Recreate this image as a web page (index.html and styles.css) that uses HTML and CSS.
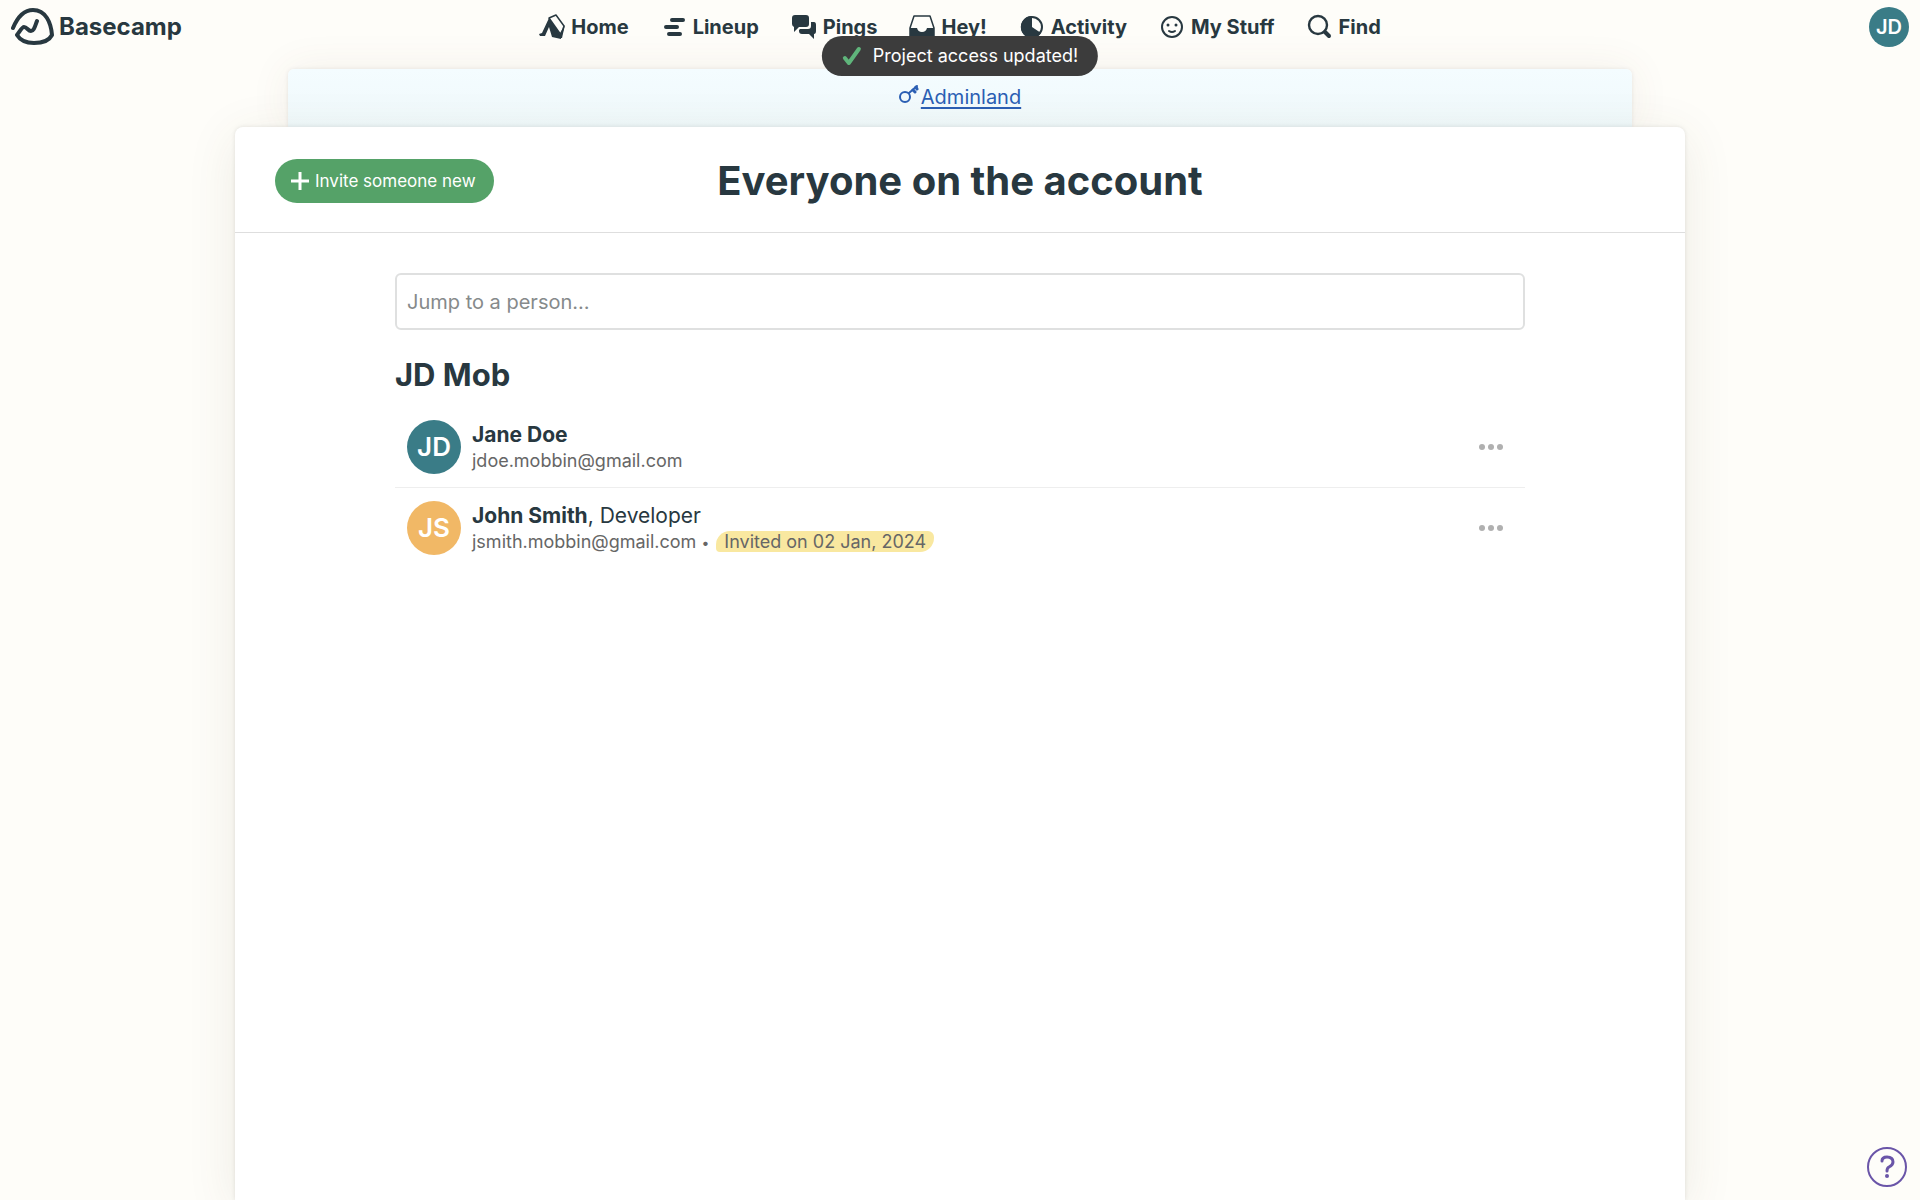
FILE: index.html
```html
<!DOCTYPE html>
<html lang="en">
	<head>
		<meta charset="utf-8" />
		<meta name="viewport" content="width=device-width, initial-scale=1">
		<title>Everyone on the account</title>
		<link rel="stylesheet" href="styles.css">
	</head>
	<body>
		<header class="topbar">
			<a class="logo" href="#">
				<svg width="44" height="40" viewBox="0 0 44 40" fill="none" stroke="currentColor" stroke-width="4" stroke-linecap="round" stroke-linejoin="round">
					<path d="M2 21C7 9 13 3 22 3C35 3 40 16 41 28C38 34 31 36 23 36C15 36 9 33 6 28C9 24 11 20 13 20C16 20 17 24 20 24C23 24 24 19 26 14"/>
				</svg>
				<span>Basecamp</span>
			</a>
			<nav class="nav">
				<a href="#">
					<svg width="26" height="26" viewBox="0 0 26 26">
						<path fill="currentColor" d="M0 20L3 19L10 4L13 7L22 22L22 25L13 23L10 13L6 22L1 22Z"/>
						<path fill="#fefdf9" stroke="currentColor" stroke-width="1.5" stroke-linejoin="round" d="M10 4L17 1L25 12L22 21Z"/>
						<path fill="currentColor" d="M21 19L26 11L23 24L19 24Z"/>
					</svg>
					Home
				</a>
				<a href="#">
					<svg width="26" height="26" viewBox="0 0 26 26" stroke="currentColor" stroke-width="4" stroke-linecap="round">
						<path d="M11 6H22M5 13H16M8 20H19"/>
					</svg>
					Lineup
				</a>
				<a href="#">
					<svg width="26" height="26" viewBox="0 0 26 26" fill="currentColor">
						<path d="M4 1H15Q18 1 18 4V10Q18 13 15 13H8L3 18V13Q1 12 1 10V4Q1 1 4 1Z"/>
						<path d="M20 8H23Q25 8 25 11V17Q25 20 23 20V25L18 20H11Q8 20 8 17V16L9 15H17Q20 15 20 12Z"/>
					</svg>
					Pings
				</a>
				<a href="#">
					<svg width="26" height="26" viewBox="0 0 26 26">
						<path fill="none" stroke="currentColor" stroke-width="1.5" stroke-linejoin="round" d="M5 2H21L25 14V22Q25 24 23 24H3Q1 24 1 22V14Z"/>
						<path fill="currentColor" d="M1 14H8Q9 18 13 18Q17 18 18 14H25V22Q25 24 23 24H3Q1 24 1 22Z"/>
					</svg>
					Hey!
				</a>
				<a href="#">
					<svg width="26" height="26" viewBox="0 0 26 26">
						<circle cx="13" cy="13" r="10" fill="none" stroke="currentColor" stroke-width="2"/>
						<path fill="currentColor" d="M13 2A11 11 0 1 0 22 19L13 13Z"/>
					</svg>
					Activity
				</a>
				<a href="#">
					<svg width="26" height="26" viewBox="0 0 26 26" fill="none" stroke="currentColor" stroke-width="2" stroke-linecap="round">
						<circle cx="13" cy="13" r="10"/>
						<path d="M10 17Q13 19 16 17"/>
						<circle cx="9" cy="11" r="1.5" fill="currentColor" stroke="none"/>
						<circle cx="17" cy="11" r="1.5" fill="currentColor" stroke="none"/>
					</svg>
					My Stuff
				</a>
				<a href="#">
					<svg width="26" height="26" viewBox="0 0 26 26" fill="none" stroke="currentColor" stroke-linecap="round">
						<circle cx="11" cy="11" r="9" stroke-width="2.4"/>
						<path d="M18 18L22 22" stroke-width="4"/>
					</svg>
					Find
				</a>
			</nav>
			<button class="avatar avatar-small" type="button">JD</button>
			<div class="flash" role="status">
				<svg width="20" height="20" viewBox="0 0 20 20" fill="none" stroke="currentColor" stroke-width="4" stroke-linecap="round" stroke-linejoin="round">
					<path d="M3 12L7 17L17 3"/>
				</svg>
				Project access updated!
			</div>
		</header>

		<div class="parent-sheet">
			<a class="breadcrumb" href="#">
				<svg width="20" height="20" viewBox="0 0 20 20" fill="none" stroke="currentColor" stroke-width="2" stroke-linecap="round">
					<circle cx="6" cy="13" r="5"/>
					<path d="M10 9L18 2"/>
					<path d="M14 6L16 8M17 3L18 5" stroke-width="3"/>
				</svg>
				<span>Adminland</span>
			</a>
		</div>

		<main class="sheet">
			<div class="sheet-header">
				<button class="invite" type="button">
					<svg width="18" height="18" viewBox="0 0 18 18" stroke="currentColor" stroke-width="3">
						<path d="M9 0V18M0 9H18"/>
					</svg>
					Invite someone new
				</button>
				<h1>Everyone on the account</h1>
			</div>

			<div class="people">
				<input class="jump" type="text" placeholder="Jump to a person…" aria-label="Jump to a person">
				<h2>JD Mob</h2>
				<ul>
					<li>
						<span class="avatar">JD</span>
						<div class="person">
							<div class="name"><strong>Jane Doe</strong></div>
							<div class="email">jdoe.mobbin@gmail.com</div>
						</div>
						<button class="more" type="button" aria-label="Options for Jane Doe">
							<svg width="24" height="6" viewBox="0 0 24 6" fill="currentColor">
								<circle cx="3" cy="3" r="3"/><circle cx="12" cy="3" r="3"/><circle cx="21" cy="3" r="3"/>
							</svg>
						</button>
					</li>
					<li>
						<span class="avatar avatar-orange">JS</span>
						<div class="person">
							<div class="name"><strong>John Smith</strong>, Developer</div>
							<div class="email">jsmith.mobbin@gmail.com <span class="dot">•</span> <mark>Invited on 02 Jan, 2024</mark></div>
						</div>
						<button class="more" type="button" aria-label="Options for John Smith">
							<svg width="24" height="6" viewBox="0 0 24 6" fill="currentColor">
								<circle cx="3" cy="3" r="3"/><circle cx="12" cy="3" r="3"/><circle cx="21" cy="3" r="3"/>
							</svg>
						</button>
					</li>
				</ul>
			</div>
		</main>

		<button class="help" type="button" aria-label="Help">
			<svg width="40" height="40" viewBox="0 0 40 40" fill="none" stroke="currentColor" stroke-linecap="round">
				<circle cx="20" cy="20" r="19" stroke-width="2"/>
				<path d="M15 14Q15 10 20 10Q26 10 26 15Q26 18 22 20Q20 21 20 24" stroke-width="3"/>
				<circle cx="20" cy="29" r="2" fill="currentColor" stroke="none"/>
			</svg>
		</button>
	</body>
</html>
```
FILE: styles.css
```css
*{
	box-sizing: border-box;
}
body{
	margin: 0;
	min-height: 100vh;
	display: flex;
	flex-direction: column;
	background-color: #fefdf9;
	color: #283840;
	font-family: Inter, "Liberation Sans", sans-serif;
	font-size: 20px;
	line-height: 26px;
}
button, input{
	font-family: inherit;
}
button{
	border: 0;
	cursor: pointer;
}
h1, h2, ul{
	margin: 0;
	padding: 0;
}
svg{
	flex: none;
}

/* top bar */
.topbar{
	position: relative;
	display: grid;
	grid-template-columns: 1fr auto 1fr;
	align-items: center;
	height: 53px;
	padding: 0 11px;
}
.logo{
	display: flex;
	align-items: center;
	gap: 4px;
	color: inherit;
	font-size: 24px;
	font-weight: 700;
	text-decoration: none;
}
.nav{
	display: flex;
	gap: 32px;
}
.nav a{
	display: flex;
	align-items: center;
	gap: 6px;
	color: inherit;
	font-weight: 700;
	text-decoration: none;
}
.flash{
	position: absolute;
	z-index: 2;
	top: 36px;
	left: 50%;
	transform: translateX(-50%);
	display: flex;
	align-items: center;
	gap: 11px;
	height: 40px;
	padding: 0 20px;
	border-radius: 20px;
	background-color: #3c3c3c;
	color: #fff;
	font-size: 18px;
	white-space: nowrap;
}
.flash svg{
	color: #5fb57b;
}

.avatar{
	display: flex;
	flex: none;
	align-items: center;
	justify-content: center;
	width: 54px;
	height: 54px;
	padding: 0;
	border-radius: 50%;
	background-color: #3a7c87;
	color: #fff;
	font-size: 26px;
	font-weight: 600;
}
.avatar-orange{
	background-color: #f1b866;
}
.avatar-small{
	justify-self: end;
	width: 40px;
	height: 40px;
	font-size: 20px;
}

/* sheets */
.parent-sheet{
	display: flex;
	justify-content: center;
	width: 70%;
	height: 58px;
	margin: 16px auto 0;
	padding-top: 15px;
	border-radius: 6px 6px 0 0;
	background: linear-gradient(#f4fcff, #f0f9fb);
	box-shadow: 0 0 4px rgba(0,0,0,0.08), 0 0 40px rgba(120,80,50,0.08);
}
.breadcrumb{
	display: flex;
	align-items: flex-start;
	gap: 2px;
	height: 26px;
	color: #2b5fb4;
	font-size: 20px;
	text-decoration: none;
}
.breadcrumb span{
	text-decoration: underline;
	text-decoration-thickness: 2px;
	text-underline-offset: 3px;
}
.sheet{
	position: relative;
	flex: 1;
	width: calc(100% - 40px);
	max-width: 1450px;
	margin: 0 auto;
	border-radius: 8px 8px 0 0;
	background-color: #fff;
	box-shadow: 0 0 4px rgba(0,0,0,0.1), 0 10px 50px rgba(90,80,40,0.1);
}
.sheet-header{
	display: grid;
	grid-template-columns: 1fr auto 1fr;
	align-items: center;
	height: 106px;
	padding: 2px 40px 0;
	border-bottom: 1px solid #dedede;
}
.invite{
	display: flex;
	align-items: center;
	gap: 6px;
	justify-self: start;
	height: 44px;
	padding: 0 18px 0 16px;
	border-radius: 22px;
	background-color: #55a268;
	color: #fff;
	font-size: 17px;
}
h1{
	font-size: 40px;
	font-weight: 700;
	line-height: 52px;
}

/* people list */
.people{
	padding: 40px 160px;
}
.jump{
	display: block;
	width: 100%;
	height: 57px;
	padding: 0 10px;
	border: 2px solid #dfe0e0;
	border-radius: 6px;
	background-color: #fff;
	color: inherit;
	font-size: 20px;
}
.jump::placeholder{
	color: #868a8b;
}
h2{
	margin: 25px 0 12px;
	font-size: 31px;
	font-weight: 700;
	line-height: 40px;
}
li{
	display: flex;
	align-items: center;
	gap: 11px;
	height: 80px;
	padding: 0 14px 0 12px;
}
li + li{
	height: 81px;
	border-top: 1px solid #eee;
}
.person{
	flex: 1;
	padding-top: 2px;
}
.name{
	font-size: 21px;
}
.email{
	color: #666;
	font-size: 18px;
}
.dot{
	font-size: 14px;
}
mark{
	margin-left: 2px;
	padding: 0 8px;
	border-radius: 14px 6px 14px 4px;
	background-color: #f9e8a0;
	color: inherit;
}
.more{
	display: flex;
	padding: 8px;
	background: none;
	color: #b0b0b0;
}

.help{
	position: fixed;
	right: 13px;
	bottom: 13px;
	display: flex;
	padding: 0;
	border-radius: 50%;
	background: none;
	color: #6a55a8;
}
```
